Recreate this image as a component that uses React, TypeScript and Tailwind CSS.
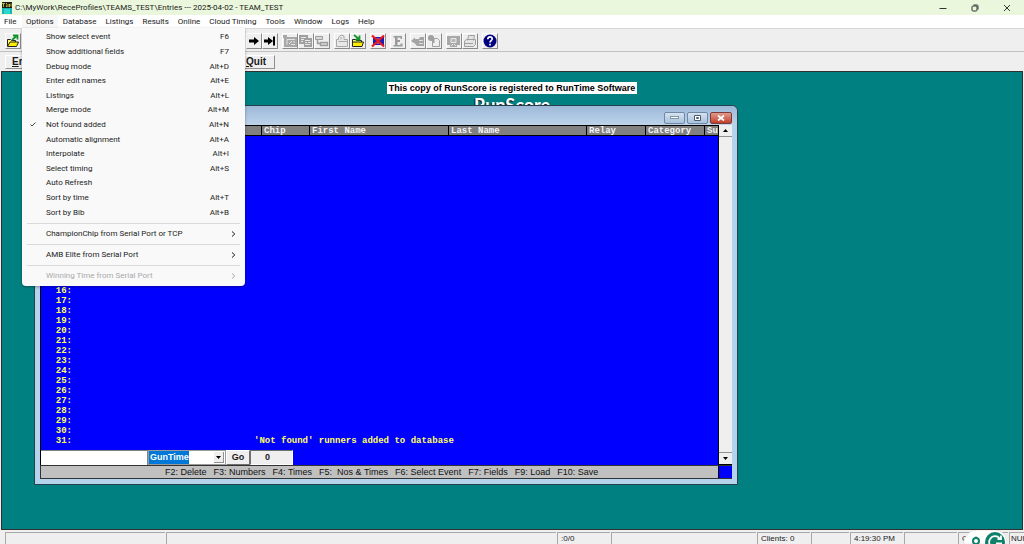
import type { ReactNode } from "react";

const MENUS = ["Database", "Listings", "Results", "Online", "Cloud Timing", "Tools", "Window", "Logs", "Help"];

const OPTIONS: { label: string; keys?: string; checked?: boolean }[] = [
  { label: "Show select event", keys: "F6" },
  { label: "Show additional fields", keys: "F7" },
  { label: "Debug mode", keys: "Alt+D" },
  { label: "Enter edit names", keys: "Alt+E" },
  { label: "Listings", keys: "Alt+L" },
  { label: "Merge mode", keys: "Alt+M" },
  { label: "Not found added", keys: "Alt+N", checked: true },
  { label: "Automatic alignment", keys: "Alt+A" },
  { label: "Interpolate", keys: "Alt+I" },
  { label: "Select timing", keys: "Alt+S" },
  { label: "Auto Refresh" },
  { label: "Sort by time", keys: "Alt+T" },
  { label: "Sort by Bib", keys: "Alt+B" },
];

const SUBMENUS = [
  { label: "ChampionChip from Serial Port or TCP", disabled: false },
  { label: "AMB Elite from Serial Port", disabled: false },
  { label: "Winning Time from Serial Port", disabled: true },
];

const FIRST_ROW = 16;
const LAST_ROW = 31;
const ROWS = Array.from({ length: LAST_ROW - FIRST_ROW + 1 }, (_, i) => FIRST_ROW + i);

function AppIcon() {
  return (
    <svg width="10" height="12" viewBox="0 0 10 12" aria-hidden="true">
      <rect width="10" height="6" fill="#1c1c10" />
      <path d="M0 1.500h3M1.500 2v3M4 1.500h1M4 3.200h1M4 4.500h1M6 2v3M7.500 2v3M9 1.500v3" stroke="#e8e04a" strokeWidth="0.8" />
      <rect y="6" width="10" height="6" fill="#19b5b5" />
      <rect x="2" y="7" width="6" height="5" fill="#2fd6cf" />
    </svg>
  );
}

function ToolButton({ label, children }: { label: string; children: ReactNode }) {
  return (
    <button
      type="button"
      aria-label={label}
      className="flex size-4 items-center justify-center border border-t-white border-r-[#8a8a8a] border-b-[#8a8a8a] border-l-white bg-[#efefef]"
    >
      <svg width="14" height="14" viewBox="0 0 14 14" aria-hidden="true">
        {children}
      </svg>
    </button>
  );
}

function OpenIcon() {
  return (
    <>
      <path d="M1.5 12V5.5h3l1 1h4V8" fill="#ffff66" stroke="#222" />
      <path d="M1.5 12.5 4 8h8.500l-2 4.500z" fill="#ffee00" stroke="#222" />
      <path d="M6 6 10.500 2M7 1.500h4.500v4" fill="none" stroke="#12962b" strokeWidth="1.800" />
    </>
  );
}

function SaveIcon() {
  return (
    <>
      <path d="M1.5 12V5.5h3l1 1h5V8" fill="#ffff66" stroke="#222" />
      <path d="M1.5 12.5V8h11l-1.500 4.500z" fill="#ffee00" stroke="#222" />
      <path d="M3 1 8 5M8.500 1.500v4h-4" fill="none" stroke="#12962b" strokeWidth="1.800" />
    </>
  );
}

function Toolbar() {
  return (
    <div className="flex h-[23px] shrink-0 items-center border-b border-[#c0c0c0] bg-[#efefef] pt-px pl-[5px]">
      <ToolButton label="Open"><OpenIcon /></ToolButton>
      <div className="ml-[225px] flex gap-1">
        <div className="flex">
          <ToolButton label="Next">
            <path d="M2 5.500h5V3l5 4-5 4V8.500H2z" fill="#000" />
          </ToolButton>
          <ToolButton label="Last">
            <path d="M1 5.500h4V3l5 4-5 4V8.500H1zM10 2.500h2v9h-2z" fill="#000" />
          </ToolButton>
        </div>
        <div className="flex">
          <ToolButton label="Chart">
            <path d="M0 1h4v2h10v10H1V4H0z" fill="#a8a8a8" />
            <path d="M4 5.500h8M4 5.500v5M6 10l3-3M8 10.500h4M10 8h2" fill="none" stroke="#e4e4e4" />
          </ToolButton>
          <ToolButton label="Copy table">
            <path d="M0 1h9v3h4v9H5v-3H0z" fill="#a0a0a0" />
            <path d="M2 3.500h5M2 5.500h3M2 7.500h2M6 6.500h5M6 8.500h2M9 8.500h3M6 10.500h5" stroke="#e8e8e8" />
          </ToolButton>
          <ToolButton label="Cascade">
            <path d="M.5 2.500h7v3h-7z" fill="#d8d8d8" stroke="#9c9c9c" />
            <path d="M2.500 5.500v4h3M5.500 8.500h7v3h-7z" fill="#d8d8d8" stroke="#9c9c9c" strokeWidth="1.400" />
          </ToolButton>
        </div>
        <div className="flex">
          <ToolButton label="Import">
            <path d="M1.500 12.500V5.500h2V3.500L6 1l3 1v3.500h3.500v7zM3.500 7.500h9M6 3v2.500" fill="#e8e8e8" stroke="#a8a8a8" />
          </ToolButton>
          <ToolButton label="Save"><SaveIcon /></ToolButton>
        </div>
        <ToolButton label="Clear">
          <rect x="2" y="3" width="11" height="8" fill="#1c1cb8" />
          <path d="M5 5h5M5 9h5" stroke="#b8b8ff" />
          <path d="M1 1.500l12 11M13 1.500 1 12.500" stroke="#f01818" strokeWidth="2.200" />
        </ToolButton>
        <ToolButton label="Edit">
          <path d="M2.500 2H11v3H9.500V3.500H6.500V6H9v2H6.500v3h3V9.500H11.500V12.500H2.500V11H4V3.500H2.500z" fill="#9a9a9a" />
        </ToolButton>
        <div className="flex">
          <ToolButton label="Send">
            <path d="M0 7l4-3.500V5h4l1-2h4v9H6L4 9.500 3 9z" fill="#a4a4a4" />
            <path d="M8 6.500h4M8 9.500h4" stroke="#e0e0e0" />
          </ToolButton>
          <ToolButton label="Timer page">
            <path d="M5.500 4.500h5l2 2v6h-7z" fill="#eeeeee" stroke="#a0a0a0" />
            <circle cx="4" cy="4" r="3" fill="#a0a0a0" />
            <path d="M6.500 5v4" stroke="#a0a0a0" strokeWidth="2" />
          </ToolButton>
        </div>
        <div className="flex">
          <ToolButton label="Preview">
            <path d="M0 2h13v9h-3v2H3v-2H0z" fill="#a8a8a8" />
            <path d="M4 4.500h5v4H4z" fill="#b8b8b8" stroke="#e8e8e8" />
            <path d="M4 12l2-2M9 12l-2-2" stroke="#e8e8e8" />
          </ToolButton>
          <ToolButton label="Print">
            <path d="M4.500 6.500l1-5h6l-1 5M1.500 7l2-1.500h9v5l-2 2h-9z" fill="#e4e4e4" stroke="#a0a0a0" />
            <path d="M2 9.500h8" stroke="#a0a0a0" />
          </ToolButton>
        </div>
        <ToolButton label="Help">
          <circle cx="7" cy="7" r="6.500" fill="#000080" />
          <path d="M4.800 5.200C4.800 2 9.400 2.200 9.200 5 9 6.700 7 6.500 7 8.500M7 9.800v1.800" fill="none" stroke="#fff" strokeWidth="1.700" />
        </ToolButton>
      </div>
    </div>
  );
}

function Chevron() {
  return (
    <svg width="5" height="6" viewBox="0 0 5 6" fill="none" stroke="currentColor" aria-hidden="true">
      <path d="M1 .5 3.800 3 1 5.500" />
    </svg>
  );
}

function OptionsMenu() {
  return (
    <div role="menu" className="absolute top-[13px] left-0 z-20 w-[223px] rounded-b bg-[#f9f9f9] pt-0.5 text-[8px] text-[#1c1c1c] shadow-[0_1px_3px_rgba(0,0,0,0.35)]">
      <div className="grid h-[190px] grid-rows-[repeat(13,minmax(0,1fr))]">
        {OPTIONS.map((o) => (
          <button key={o.label} type="button" role="menuitem" className="flex items-center pr-4 pl-2 text-left leading-none">
            <span className="w-4">
              {o.checked && (
                <svg width="6" height="5" viewBox="0 0 6 5" fill="none" stroke="#444" aria-hidden="true">
                  <path d="M.5 2.500 2 4 5.500.5" />
                </svg>
              )}
            </span>
            <span className="flex-1">{o.label}</span>
            <span>{o.keys}</span>
          </button>
        ))}
      </div>
      <div className="pt-[3px]">
        {SUBMENUS.map((s) => (
          <div key={s.label}>
            <hr className="mx-[5px] border-[#dadada]" />
            <button
              type="button"
              role="menuitem"
              disabled={s.disabled}
              className="flex h-5 w-full items-center justify-between pr-[9px] pl-6 leading-none disabled:text-[#a9a9a9]"
            >
              {s.label}
              <Chevron />
            </button>
          </div>
        ))}
      </div>
    </div>
  );
}

function MenuBar() {
  return (
    <nav className="flex h-[14px] shrink-0 items-start border-b border-[#d8d8d8] bg-white text-[8px]">
      <button type="button" className="h-[13px] w-[22px] pl-1 text-left leading-none">File</button>
      <div className="relative">
        <button type="button" className="h-[13px] bg-[#f7f7f7] px-1 leading-none">Options</button>
        <OptionsMenu />
      </div>
      {MENUS.map((m) => (
        <button key={m} type="button" className="ml-px h-[13px] px-1 leading-none">{m}</button>
      ))}
    </nav>
  );
}

function RunnerWindow() {
  const cell = "border-l border-black pl-0.5";
  return (
    <section className="absolute top-[33px] left-[32px] w-[704px] rounded-t-md border border-[#28404c] bg-[#b4d3ec] px-[5px] pb-[5px]">
      <header className="-mx-[5px] flex h-[19px] items-center justify-end gap-0.5 rounded-t-md bg-linear-to-b from-[#9db9d8] to-[#bdd3ea] pt-1 pr-[5px]">
        <button type="button" aria-label="Minimize" className="flex h-3 w-[21px] items-center justify-center rounded-xs border border-[#7088a4] bg-linear-to-b from-[#d5e3f1] to-[#a9c2dc]">
          <svg width="9" height="5" viewBox="0 0 9 5" aria-hidden="true"><rect x=".5" y="1.500" width="8" height="2" fill="#fff" stroke="#8595a8" /></svg>
        </button>
        <button type="button" aria-label="Maximize" className="flex h-3 w-[21px] items-center justify-center rounded-xs border border-[#7088a4] bg-linear-to-b from-[#d5e3f1] to-[#a9c2dc]">
          <svg width="7" height="6" viewBox="0 0 7 6" aria-hidden="true"><path d="M.5.5h6v5h-6zM2.500 2.500h2v1h-2z" fill="#fff" stroke="#4c5c70" /></svg>
        </button>
        <button type="button" aria-label="Close" className="flex h-3 w-[22px] items-center justify-center rounded-xs border border-[#7a3a3a] bg-linear-to-b from-[#e09a8c] to-[#c03c28]">
          <svg width="8" height="6" viewBox="0 0 8 6" aria-hidden="true"><path d="M1 .5l6 5M7 .5l-6 5" stroke="#fff" strokeWidth="1.800" /></svg>
        </button>
      </header>
      <div className="flex border-l border-black">
        <div className="min-w-0 flex-1 bg-[#0000ff]">
          <div className="flex h-[11px] overflow-hidden border-y border-black bg-[#808080] font-['Liberation_Mono',monospace] text-[9px] leading-[10px] font-bold whitespace-nowrap text-[#f4f4f4]">
            <div className="w-[220px]" />
            <div className={`w-12 ${cell}`}>Chip</div>
            <div className={`w-[139px] ${cell}`}>First Name</div>
            <div className={`w-[138px] ${cell}`}>Last Name</div>
            <div className={`w-[59px] ${cell}`}>Relay</div>
            <div className={`w-[59px] ${cell}`}>Category</div>
            <div className={`w-0 flex-1 ${cell}`}>Sul</div>
          </div>
          <div className="flex h-[314px] flex-col justify-end pb-1 font-['Liberation_Mono',monospace] text-[9px] leading-[10px] font-bold text-[#ffff60]">
            {ROWS.map((n) => (
              <div key={n} className="flex h-[10px]">
                <span className="w-[31px] text-right">{n}:</span>
                {n === LAST_ROW && <span className="ml-[182px]">'Not found' runners added to database</span>}
              </div>
            ))}
          </div>
          <div className="flex h-[15px] font-['Liberation_Sans',sans-serif] text-[9px] font-bold">
            <input aria-label="Entry" className="w-[107px] border-t border-r border-[#808080] bg-white px-1 outline-none" />
            <div className="relative w-[78px]">
              <select
                aria-label="Time type"
                defaultValue="GunTime"
                className="size-full appearance-none border border-[#9a9a9a] bg-white bg-[linear-gradient(to_right,#0078d7_40px,#ffffff_40px)] pl-px text-white outline-none"
              >
                <option>GunTime</option>
              </select>
              <span className="pointer-events-none absolute inset-y-0.5 right-0.5 flex w-[10px] items-center justify-center border-r border-b border-[#909090] bg-[#efefef]">
                <svg width="5" height="3" viewBox="0 0 5 3" aria-hidden="true"><path d="M0 0h5L2.500 3z" /></svg>
              </span>
            </div>
            <button type="button" className="w-6 border border-t-white border-r-[#707070] border-b-[#707070] border-l-white bg-[#efefef] leading-none">Go</button>
            <output className="w-[43px] border border-t-[#707070] border-r-white border-b-white border-l-[#707070] bg-[#efefef] pr-2 text-center leading-[13px]">0</output>
          </div>
        </div>
        <div className="flex w-[14px] flex-col justify-between border-b border-l border-black bg-[#efefef]">
          <button type="button" aria-label="Scroll up" className="flex h-3 items-center justify-center border-b border-[#909090]">
            <svg width="5" height="3" viewBox="0 0 5 3" aria-hidden="true"><path d="M0 3h5L2.500 0z" /></svg>
          </button>
          <button type="button" aria-label="Scroll down" className="flex h-3 items-center justify-center border-t border-[#909090]">
            <svg width="5" height="3" viewBox="0 0 5 3" aria-hidden="true"><path d="M0 0h5L2.500 3z" /></svg>
          </button>
        </div>
      </div>
      <footer className="flex h-[14px] border-y border-l border-[#333] bg-[#c0c0c0] font-['Liberation_Sans',sans-serif] text-[9px] leading-3 text-[#111]">
        <div className="flex flex-1 gap-[7px] pl-[124px] whitespace-pre">
          <span>F2: Delete</span>
          <span>F3: Numbers</span>
          <span>F4: Times</span>
          <span>F5:  Nos &amp; Times</span>
          <span>F6: Select Event</span>
          <span>F7: Fields</span>
          <span>F9: Load</span>
          <span>F10: Save</span>
        </div>
        <div className="w-[14px] border-l border-black bg-[#0000ff]" />
      </footer>
    </section>
  );
}

function StatusBar() {
  const cell = "shrink-0 border-t border-l border-[#a8a8a8] pl-[3px]";
  return (
    <footer className="relative flex h-[14px] shrink-0 gap-px overflow-hidden bg-[#efefef] pt-0.5 pl-[5px] font-['Liberation_Sans',sans-serif] text-[8px] leading-[11px] whitespace-nowrap text-[#222]">
      <div className={`w-40 ${cell}`} />
      <div className={`min-w-0 flex-1 ${cell}`} />
      <div className={`w-[53px] ${cell}`}>:0/0</div>
      <div className={`w-[145px] ${cell}`} />
      <div className={`w-[53px] ${cell}`}>Clients: 0</div>
      <div className={`w-[38px] ${cell}`} />
      <div className={`w-[53px] ${cell}`}>4:19:30 PM</div>
      <div className={`w-[53px] ${cell}`} />
      <div className={`w-[50px] ${cell}`}>C</div>
      <div className="w-[15px] shrink-0 border-t border-l border-[#a8a8a8] pl-px">NUI</div>
      <svg className="absolute top-0 right-[17px]" width="44" height="14" viewBox="0 0 44 14" aria-hidden="true">
        <path d="M0 14C2 5 7 0 14 0h17c8 0 13 5 13 14z" fill="#fff" stroke="#d0d0d0" strokeWidth=".5" />
        <circle cx="13" cy="11" r="3" fill="none" stroke="#11806a" strokeWidth="2" />
        <path d="M13 6.500v2" stroke="#11806a" strokeWidth="1.500" />
        <circle cx="32" cy="12" r="10" fill="#11806a" />
        <path d="M36.500 8A6 6 0 1 0 38 13.500H33M38 5.500v3.500h-3.500" fill="none" stroke="#fff" strokeWidth="1.800" />
      </svg>
    </footer>
  );
}

export default function App() {
  return (
    <div className="flex h-screen flex-col overflow-hidden bg-[#efefef] font-['Roboto',sans-serif] text-[#1a1a1a]">
      <header className="flex h-[15px] shrink-0 items-center bg-[#eaf7dc] pl-0.5">
        <AppIcon />
        <h1 className="ml-[3px] flex-1 text-[8px] leading-none whitespace-nowrap">
          C:\MyWork\ReceProfiles\TEAMS_TEST\Entries --- 2025-04-02 - TEAM_TEST
        </h1>
        <div className="flex items-center gap-6 pr-[13px] text-[#333]">
          <button type="button" aria-label="Minimize">
            <svg width="8" height="8" viewBox="0 0 8 8" fill="none" stroke="currentColor" aria-hidden="true"><path d="M.5 4.500h7" /></svg>
          </button>
          <button type="button" aria-label="Restore">
            <svg width="8" height="8" viewBox="0 0 8 8" fill="none" stroke="currentColor" aria-hidden="true">
              <rect x="1" y="2" width="5" height="5" rx="1" />
              <path d="M2.500 1h3.500q1 0 1 1v3.500" />
            </svg>
          </button>
          <button type="button" aria-label="Close">
            <svg width="8" height="8" viewBox="0 0 8 8" fill="none" stroke="currentColor" aria-hidden="true"><path d="M1 1l6 6M7 1 1 7" /></svg>
          </button>
        </div>
      </header>
      <MenuBar />
      <Toolbar />
      <div className="flex h-[19px] shrink-0 items-center gap-[153px] pl-[5px] font-['Liberation_Sans',sans-serif] text-[10px] font-bold">
        <button type="button" className="h-[14px] w-[70px] border border-t-white border-r-[#909090] border-b-[#909090] border-l-white pl-[6px] text-left leading-none">
          <u>E</u>nter
        </button>
        <button type="button" className="h-[14px] w-[47px] border border-t-white border-r-[#909090] border-b-[#909090] border-l-white pr-2 text-right leading-none">
          <u>Q</u>uit
        </button>
      </div>
      <main className="relative mr-px ml-px flex min-h-0 flex-1 flex-col items-center border border-[#303030] bg-[#008080]">
        <p className="mt-[10px] bg-white px-0.5 font-['Liberation_Sans',sans-serif] text-[9px] leading-3 font-bold text-black">
          This copy of RunScore is registered to RunTime Software
        </p>
        <p className="font-['Lato',sans-serif] text-lg leading-[22px] font-bold text-white [text-shadow:-1px_1px_0_#222]">RunScore</p>
        <RunnerWindow />
      </main>
      <StatusBar />
    </div>
  );
}
